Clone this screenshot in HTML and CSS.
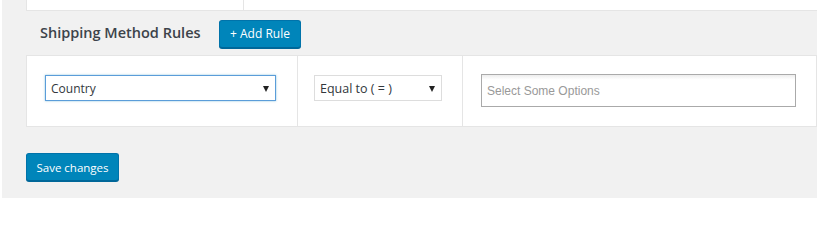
FILE: index.html
```html
<!DOCTYPE html>
<html>
<head>
<meta charset="utf-8">
<link rel="stylesheet" href="styles.css">
</head>
<body>
<div class="wrap">
  <div class="topbox">
    <div class="topcell first"></div>
    <div class="topcell"></div>
  </div>
  <div class="heading">
    <h2 class="title">Shipping Method Rules</h2>
    <button class="btn add">+ Add Rule</button>
  </div>
  <div class="rules">
    <div class="cell c1">
      <div class="select focus"><span class="val">Country</span><span class="arrow"></span></div>
    </div>
    <div class="cell c2">
      <div class="select small"><span class="val">Equal to ( = )</span><span class="arrow"></span></div>
    </div>
    <div class="cell c3">
      <div class="multi"><span class="ph">Select Some Options</span></div>
    </div>
  </div>
  <div class="actions">
    <button class="btn save">Save changes</button>
  </div>
</div>
</body>
</html>
```
FILE: styles.css
```css
html, body {
  margin: 0;
  padding: 0;
  background: #fff;
}
body {
  font-family: "Open Sans", "Noto Sans", sans-serif;
  color: #23282d;
}
.wrap {
  margin: 0 2px;
  height: 198px;
  background: #f1f1f1;
  padding-left: 24px;
  box-sizing: border-box;
}
.topbox {
  display: flex;
  height: 10px;
  background: #fff;
  border-left: 1px solid #e5e5e5;
  border-bottom: 1px solid #e5e5e5;
}
.topcell.first {
  width: 216px;
  border-right: 1px solid #e5e5e5;
}
.heading {
  display: flex;
  align-items: center;
  height: 44px;
  padding-left: 14px;
}
.title {
  margin: 0;
  font-size: 14.5px;
  font-weight: 600;
  color: #3c434a;
  width: 179px;
  white-space: nowrap;
  position: relative;
  top: -1px;
}
.btn {
  font-family: "Open Sans", "Noto Sans", sans-serif;
  background: #0085ba;
  border: 1px solid #0073aa;
  border-bottom-color: #006799;
  box-shadow: 0 1px 0 #006799;
  color: #fff;
  border-radius: 3px;
  font-size: 11.5px;
  height: 28px;
  padding: 0;
  white-space: nowrap;
  box-sizing: border-box;
}
.add {
  width: 82px;
  font-size: 12px;
  margin-top: 1px;
}
.rules {
  display: flex;
  height: 72px;
  box-sizing: border-box;
  background: #fff;
  border: 1px solid #e5e5e5;
}
.cell {
  box-sizing: border-box;
  padding-top: 19px;
}
.c1 {
  width: 271px;
  padding-left: 18px;
  border-right: 1px solid #e5e5e5;
}
.c2 {
  width: 165px;
  padding-left: 16px;
  border-right: 1px solid #e5e5e5;
}
.c3 {
  flex: 1;
  padding-left: 18px;
  padding-top: 18px;
}
.select {
  display: flex;
  align-items: center;
  justify-content: space-between;
  width: 231px;
  height: 26px;
  box-sizing: border-box;
  border: 1px solid #ddd;
  padding: 0 6px 0 5px;
  font-size: 12px;
  color: #32373c;
  background: #fff;
}
.select.focus {
  border-color: #5b9dd9;
  box-shadow: 0 0 2px rgba(30,140,190,.5);
}
.select.small {
  width: 128px;
  font-size: 12.5px;
}
.arrow {
  width: 0;
  height: 0;
  border-left: 3.5px solid transparent;
  border-right: 3.5px solid transparent;
  border-top: 6px solid #222;
  margin-top: 1px;
}
.multi {
  width: 315px;
  height: 33px;
  box-sizing: border-box;
  border: 1px solid #aaa;
  background: linear-gradient(#eee 1%, #fff 15%);
  padding: 0 5px;
  display: flex;
  align-items: center;
}
.ph {
  font-family: "Liberation Sans", Arial, sans-serif;
  font-size: 12px;
  color: #999;
}
.actions {
  padding-top: 26px;
}
.save {
  width: 93px;
}
```
